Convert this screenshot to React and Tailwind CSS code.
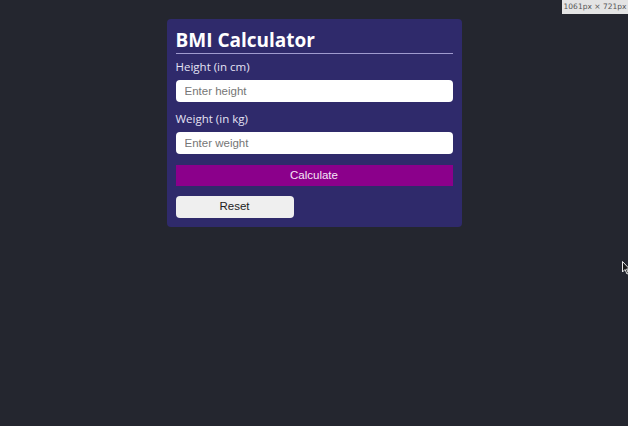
import React from 'react';

const BmiCalculator = () => {
  return (
    <div className="w-[295px] rounded-[4px] bg-[#2f2a6b] px-[9px] pt-[9px] pb-[9px] font-['Liberation_Sans',Arial,sans-serif]">
      <h1 className="h-[26px] border-b border-[#a09bcf] font-['Open_Sans',sans-serif] text-[19px] font-bold leading-[25px] text-white">
        BMI Calculator
      </h1>

      <label className="mt-[4px] block h-[18px] font-['Open_Sans',sans-serif] text-[11.5px] leading-[18px] text-[#e4e2f4]">
        Height (in cm)
      </label>
      <input
        type="text"
        placeholder="Enter height"
        className="mt-[4px] block h-[22px] w-full rounded-[4px] bg-white pl-[9px] text-[11.5px] text-[#222] outline-none placeholder:text-[#767676]"
      />

      <label className="mt-[8px] block h-[18px] font-['Open_Sans',sans-serif] text-[11.5px] leading-[18px] text-[#e4e2f4]">
        Weight (in kg)
      </label>
      <input
        type="text"
        placeholder="Enter weight"
        className="mt-[4px] block h-[22px] w-full rounded-[4px] bg-white pl-[9px] text-[11.5px] text-[#222] outline-none placeholder:text-[#767676]"
      />

      <button className="mt-[11px] block h-[21px] w-full bg-[#8b008b] text-[11.5px] text-[#f6e6f6]">
        Calculate
      </button>

      <button className="mt-[10px] block h-[22px] w-[118px] rounded-[4px] bg-[#efefef] text-[11.5px] text-[#222]">
        Reset
      </button>
    </div>
  );
};

export default function App() {
  return (
    <div className="relative flex h-[426px] w-full items-start justify-center overflow-hidden bg-[#24262f] pt-[19px]">
      <BmiCalculator />

      {/* size badge */}
      <div className="absolute right-0 top-0 flex h-[14px] w-[66px] items-center justify-center whitespace-nowrap bg-[#e4e4e4] font-['DejaVu_Sans',sans-serif] text-[7.5px] text-[#555]">
        1061px × 721px
      </div>

      {/* mouse pointer */}
      <svg className="absolute left-[622px] top-[261px]" width="8" height="14" viewBox="0 0 8 14">
        <path d="M0.5 0.5 L0.5 11 L3 8.5 L5 13 L6.5 12.3 L4.6 8 L7.5 8 Z" fill="#1a1a1a" stroke="#e8e8e8" strokeWidth="1" />
      </svg>
    </div>
  );
}
